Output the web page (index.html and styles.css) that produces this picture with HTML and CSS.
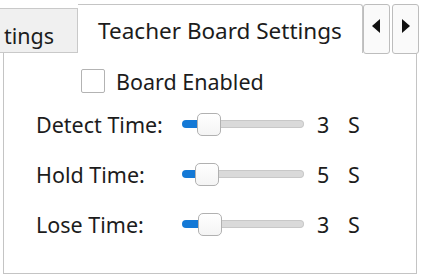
FILE: index.html
```html
<!DOCTYPE html>
<html>
<head>
<meta charset="utf-8">
<link rel="stylesheet" href="styles.css">
</head>
<body>
<div class="window">
  <div class="tabbar">
    <div class="tab inactive">tings</div>
    <div class="tab active">Teacher Board Settings</div>
    <div class="scrollers">
      <div class="scroll-btn">
        <svg width="9" height="14" viewBox="0 0 9 14"><polygon points="8,0 8,14 0,7" fill="#111"/></svg>
      </div>
      <div class="scroll-btn">
        <svg width="9" height="14" viewBox="0 0 9 14"><polygon points="1,0 1,14 9,7" fill="#111"/></svg>
      </div>
    </div>
  </div>
  <div class="panel">
    <div class="check-row">
      <span class="checkbox"></span>
      <span class="check-label">Board Enabled</span>
    </div>
    <div class="row">
      <span class="label">Detect Time:</span>
      <div class="slider">
        <span class="fill" style="width:18px"></span>
        <span class="thumb"></span>
        <span class="rest"></span>
      </div>
      <span class="value">3</span>
      <span class="unit">S</span>
    </div>
    <div class="row">
      <span class="label">Hold Time:</span>
      <div class="slider">
        <span class="fill" style="width:16px"></span>
        <span class="thumb"></span>
        <span class="rest"></span>
      </div>
      <span class="value">5</span>
      <span class="unit">S</span>
    </div>
    <div class="row">
      <span class="label">Lose Time:</span>
      <div class="slider">
        <span class="fill" style="width:19px"></span>
        <span class="thumb"></span>
        <span class="rest"></span>
      </div>
      <span class="value">3</span>
      <span class="unit">S</span>
    </div>
  </div>
</div>
</body>
</html>
```

FILE: styles.css
```css
html, body {
  margin: 0;
  padding: 0;
  background: #ffffff;
}
body {
  width: 423px;
  height: 277px;
  overflow: hidden;
  font-family: "Noto Sans", "Open Sans", sans-serif;
  font-size: 21.5px;
  color: #1c1c1c;
}
.window {
  display: flex;
  flex-direction: column;
}
.tabbar {
  display: flex;
  align-items: flex-end;
  height: 53px;
}
.tab {
  box-sizing: border-box;
  display: flex;
  justify-content: center;
  white-space: nowrap;
  overflow: hidden;
}
.tab.inactive {
  width: 78px;
  height: 45px;
  background: #f0f0f0;
  border-top: 1px solid #c9c9c9;
  border-right: 1px solid #c9c9c9;
  border-bottom: 1px solid #c9c9c9;
  justify-content: flex-start;
  padding-left: 4px;
  padding-top: 12px;
}
.tab.active {
  width: 285px;
  height: 49px;
  background: #ffffff;
  border: 1px solid #c4c4c4;
  border-bottom: none;
  border-left: none;
  border-radius: 0 3px 0 0;
  padding-top: 10px;
  font-size: 22.5px;
}
.scrollers {
  display: flex;
  gap: 2px;
  align-self: flex-start;
  margin-top: 4px;
}
.scroll-btn {
  box-sizing: border-box;
  width: 27px;
  height: 50px;
  border: 1px solid #bdbdbd;
  border-radius: 3px;
  background: #fafafa;
  display: flex;
  align-items: center;
  justify-content: center;
  padding-bottom: 6px;
}
.panel {
  box-sizing: border-box;
  margin-left: 3px;
  width: 414px;
  height: 221px;
  border: 1px solid #c4c4c4;
  border-top: none;
  padding: 16px 0 0 32px;
}
.check-row {
  display: flex;
  align-items: center;
  height: 24px;
  margin-left: 45px;
}
.checkbox {
  box-sizing: border-box;
  width: 24px;
  height: 24px;
  border: 1px solid #b3b3b3;
  border-radius: 2px;
  background: #ffffff;
}
.check-label {
  margin-left: 11px;
}
.row {
  display: flex;
  align-items: center;
  height: 50px;
}
.check-row + .row {
  margin-top: 6px;
}
.label {
  width: 146px;
}
.slider {
  display: flex;
  align-items: center;
  width: 122px;
  height: 24px;
}
.fill {
  height: 8px;
  background: #1479d6;
  border-radius: 4px 0 0 4px;
  margin-right: -3px;
}
.thumb {
  box-sizing: border-box;
  width: 24px;
  height: 23px;
  border: 1px solid #b1b1b1;
  border-radius: 5px;
  background: linear-gradient(#ffffff, #f4f4f4);
  position: relative;
  z-index: 1;
}
.rest {
  flex: 1;
  box-sizing: border-box;
  height: 8px;
  background: #dadada;
  border: 1px solid #c8c8c8;
  border-left: none;
  border-radius: 0 4px 4px 0;
  margin-left: -3px;
}
.value {
  margin-left: 13px;
  width: 31px;
}
```
